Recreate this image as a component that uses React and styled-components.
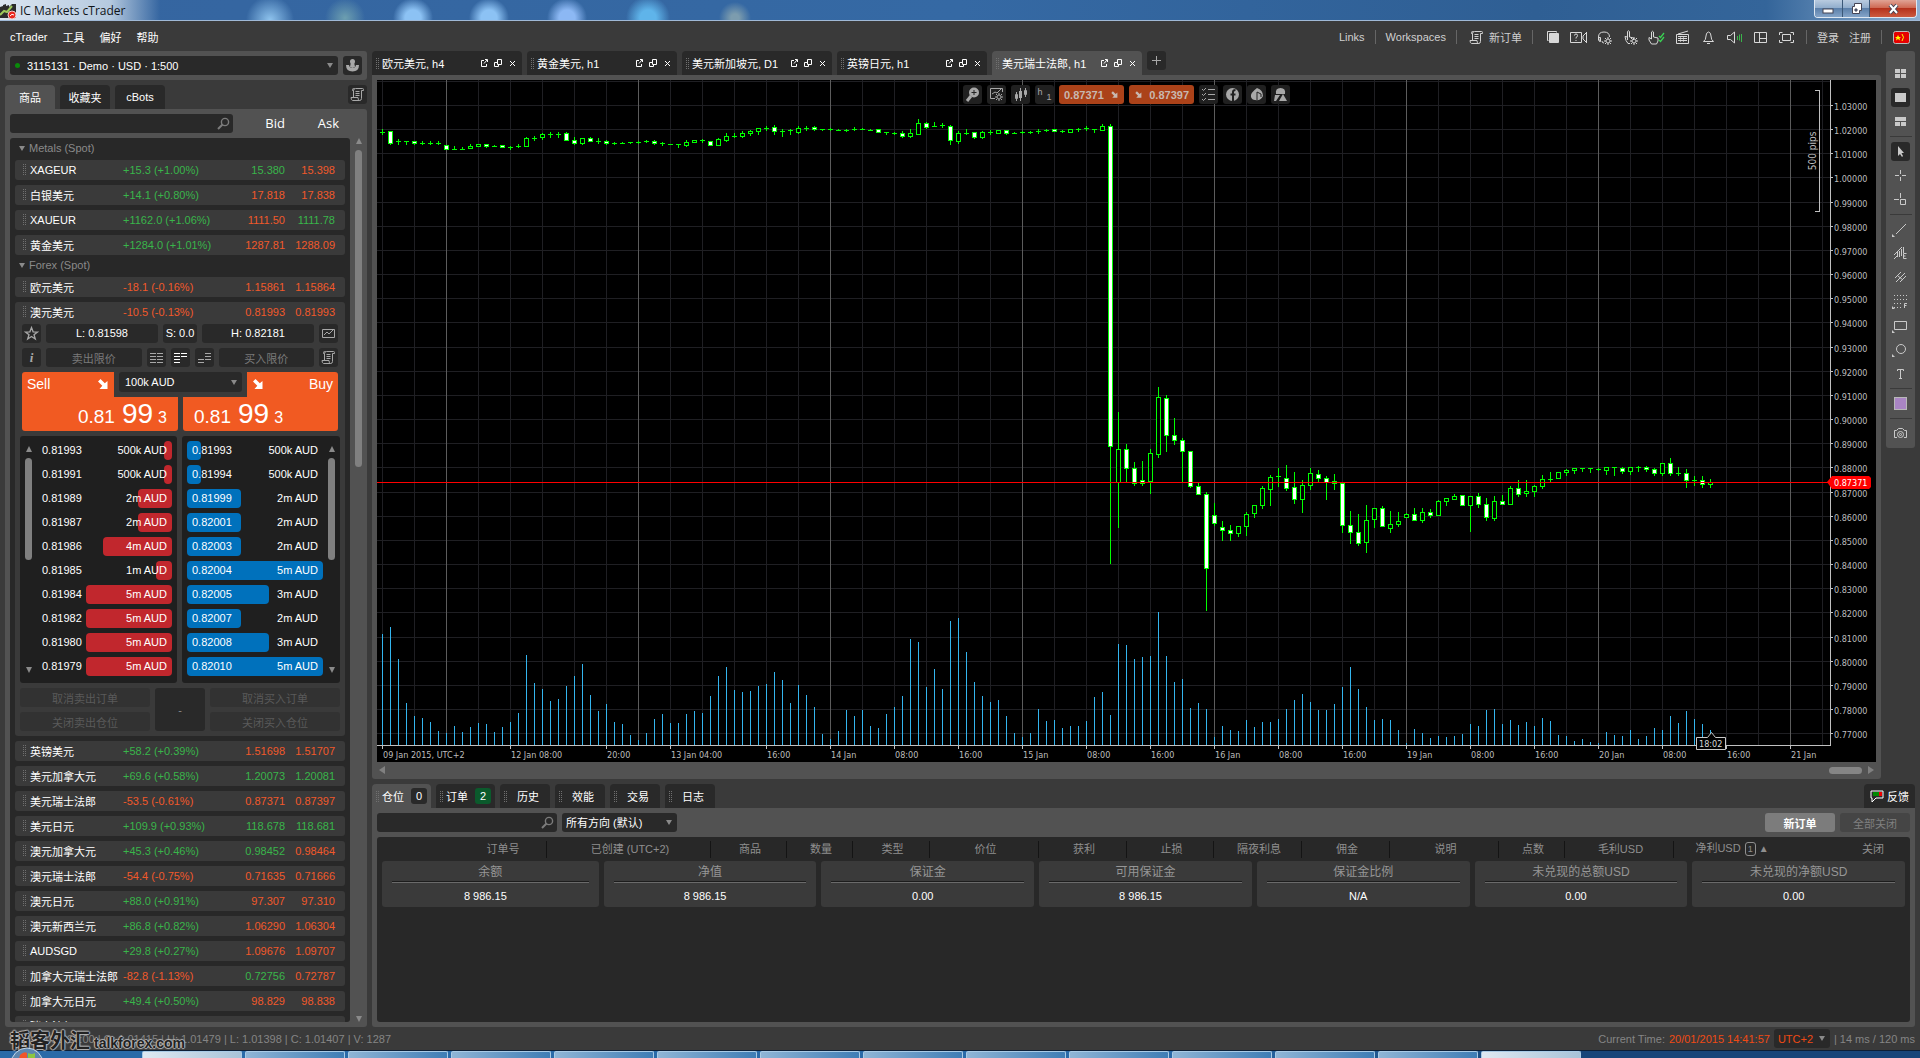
import React from "react";
import styled, { createGlobalStyle } from "styled-components";

const GlobalStyle = createGlobalStyle`
  * { box-sizing: border-box; }
  body {
    margin: 0;
    background: #3a3a3a;
    color: #fff;
    font: 11px "Liberation Sans", "Noto Sans CJK SC", sans-serif;
  }
  button, input, select {
    font: inherit;
    color: inherit;
    border: 0;
    padding: 0;
    margin: 0;
    background: none;
    outline: none;
  }
  table { border-spacing: 0; }
  td, th { padding: 0; font-weight: normal; }
  svg { display: block; flex: none; }
`;

const GREEN = "#39b54a";
const ORANGE = "#f1592a";

/* ---------- data ---------- */

const metals = [
  ["XAGEUR", "+15.3 (+1.00%)", "15.380", 1, "15.398", 0],
  ["白银美元", "+14.1 (+0.80%)", "17.818", 0, "17.838", 0],
  ["XAUEUR", "+1162.0 (+1.06%)", "1111.50", 0, "1111.78", 1],
  ["黄金美元", "+1284.0 (+1.01%)", "1287.81", 0, "1288.09", 0],
];

const forex = [
  ["欧元美元", "-18.1 (-0.16%)", "1.15861", 0, "1.15864", 0],
  ["澳元美元", "-10.5 (-0.13%)", "0.81993", 0, "0.81993", 0, true],
  ["英镑美元", "+58.2 (+0.39%)", "1.51698", 0, "1.51707", 0],
  ["美元加拿大元", "+69.6 (+0.58%)", "1.20073", 1, "1.20081", 1],
  ["美元瑞士法郎", "-53.5 (-0.61%)", "0.87371", 0, "0.87397", 0],
  ["美元日元", "+109.9 (+0.93%)", "118.678", 1, "118.681", 1],
  ["澳元加拿大元", "+45.3 (+0.46%)", "0.98452", 1, "0.98464", 0],
  ["澳元瑞士法郎", "-54.4 (-0.75%)", "0.71635", 0, "0.71666", 0],
  ["澳元日元", "+88.0 (+0.91%)", "97.307", 0, "97.310", 0],
  ["澳元新西兰元", "+86.8 (+0.82%)", "1.06290", 0, "1.06304", 0],
  ["AUDSGD", "+29.8 (+0.27%)", "1.09676", 0, "1.09707", 0],
  ["加拿大元瑞士法郎", "-82.8 (-1.13%)", "0.72756", 1, "0.72787", 0],
  ["加拿大元日元", "+49.4 (+0.50%)", "98.829", 0, "98.838", 0],
  ["瑞士法郎日元", "+204.1 (+1.53%)", "135.810", 1, "135.866", 1],
];

const bids = [
  ["0.81993", "500k AUD", 8],
  ["0.81991", "500k AUD", 8],
  ["0.81989", "2m AUD", 34],
  ["0.81987", "2m AUD", 34],
  ["0.81986", "4m AUD", 69],
  ["0.81985", "1m AUD", 16],
  ["0.81984", "5m AUD", 86],
  ["0.81982", "5m AUD", 86],
  ["0.81980", "5m AUD", 86],
  ["0.81979", "5m AUD", 86],
];

const asks = [
  ["0.81993", "500k AUD", 14],
  ["0.81994", "500k AUD", 14],
  ["0.81999", "2m AUD", 54],
  ["0.82001", "2m AUD", 54],
  ["0.82003", "2m AUD", 54],
  ["0.82004", "5m AUD", 136],
  ["0.82005", "3m AUD", 82],
  ["0.82007", "2m AUD", 54],
  ["0.82008", "3m AUD", 82],
  ["0.82010", "5m AUD", 136],
];

// high, body top, body bottom, low, 1 for a falling bar
const candles = [
  [129,132,132,134],[131,131,143,144,1],[139,141,141,144],[141,141,141,144],[141,141,143,144,1],
  [141,143,143,144],[141,143,143,144],[141,143,143,144],[145,145,149,149,1],[146,149,149,149],
  [147,149,149,149],[144,146,148,148],[144,144,146,146],[144,144,146,147,1],[145,146,146,146],
  [145,145,147,147,1],[146,147,147,149],[144,146,146,147],[137,138,146,146],[136,138,138,140],
  [133,134,137,139],[132,134,134,137],[132,134,134,137],[132,133,140,140,1],[137,140,143,144,1],
  [138,138,143,144],[137,138,141,141,1],[138,141,141,143],[140,141,143,144,1],[142,143,143,144],
  [142,143,143,143],[142,142,142,143],[141,142,142,143],[140,141,141,142],[140,141,143,144,1],
  [142,143,143,145],[144,144,144,144],[144,144,144,147],[140,142,145,146],[140,140,142,142],
  [139,140,140,142],[141,141,145,145,1],[138,139,145,145],[133,136,140,141],[133,136,136,137],
  [131,133,136,137],[130,131,133,135],[128,128,131,134],[126,128,128,130],[125,127,131,134,1],
  [129,131,131,136],[129,130,130,134],[126,128,132,133],[126,128,128,130],[126,127,129,130,1],
  [129,129,129,130],[128,129,129,130],[129,130,130,130],[129,130,130,131],[127,129,129,130],
  [128,129,129,129],[129,130,130,130],[129,129,132,132,1],[132,132,132,134],[132,133,133,134],
  [131,133,136,137,1],[129,133,136,137],[119,123,134,134],[122,123,127,128,1],[122,126,126,126],
  [123,125,125,127],[125,126,140,144,1],[131,133,141,143],[129,133,133,134],[132,132,137,138,1],
  [131,132,137,138],[130,132,132,134],[130,130,133,133],[130,130,133,134,1],[132,133,133,133],
  [131,132,132,133],[131,132,132,133],[129,131,131,133],[129,130,130,131],[129,129,131,131,1],
  [130,131,131,132],[129,129,132,132],[128,129,129,131],[126,128,128,130],[129,129,129,132],
  [124,126,130,130],[124,126,446,563,1],[412,449,482,527],[444,449,468,481,1],[462,468,483,485,1],
  [461,480,483,485,1],[449,453,481,493],[387,397,454,457],[395,398,435,451,1],[418,435,440,444,1],
  [438,440,451,481,1],[451,451,486,487,1],[483,486,494,494,1],[492,494,568,610,1],[503,515,523,525,1],
  [521,527,530,540,1],[525,530,533,540,1],[526,526,533,536],[512,514,526,535],[505,505,513,517],
  [486,488,505,508],[475,477,489,505],[468,476,476,486],[465,478,488,490,1],[472,487,499,503,1],
  [480,485,499,512],[468,473,485,489],[470,474,478,481,1],[476,478,482,499,1],[474,481,483,489,1],
  [483,483,525,532,1],[511,525,532,543,1],[514,532,543,545,1],[505,520,542,552],[508,508,519,527],
  [506,508,526,526,1],[511,524,528,532],[512,521,524,526],[513,514,517,517],[508,514,520,520,1],
  [508,512,520,522],[509,512,515,517,1],[500,501,515,515],[498,498,501,505],[494,496,499,499],
  [495,495,505,505,1],[496,496,505,531],[493,496,504,507,1],[498,504,517,520,1],[496,501,518,520],
  [495,501,504,504,1],[486,488,504,504],[480,488,494,496,1],[480,491,493,496],[485,486,491,496],
  [475,479,486,488],[472,479,479,482],[472,472,478,478],[469,470,472,475],[468,468,470,473],
  [468,468,468,471],[468,468,468,472],[468,469,469,470],[467,467,470,474],[467,467,467,475],
  [467,468,471,473,1],[467,467,471,474],[466,467,467,471],[466,467,469,471,1],[468,469,473,475,1],
  [463,463,473,475],[458,463,473,475,1],[467,473,473,475],[469,473,480,487,1],[476,480,480,485],
  [476,480,484,487,1],[479,482,484,487],
];

const volumes = [
  111,118,86,42,29,27,23,14,12,19,13,18,22,21,13,18,23,32,90,62,56,44,46,59,69,81,50,34,41,23,21,10,
  5,12,26,31,22,22,31,34,32,49,69,78,55,53,54,59,61,73,65,42,60,50,38,11,6,14,35,29,35,19,17,31,38,
  49,106,103,58,76,56,124,127,93,63,49,43,45,29,12,8,12,36,24,25,17,19,19,24,48,53,30,101,100,86,88,
  89,133,89,63,66,37,42,36,8,19,15,14,25,18,23,23,26,36,45,51,43,35,35,41,58,78,56,38,25,26,25,15,2,
  16,12,7,9,8,9,11,21,19,35,36,21,25,20,23,19,27,24,10,9,4,6,3,2,13,10,9,15,6,9,17,15,29,22,34,26,21,15,
];

// bar index, label
const timeLabels = [
  [0, "09 Jan 2015, UTC+2"], [16, "12 Jan 08:00"], [28, "20:00"], [36, "13 Jan 04:00"], [48, "16:00"],
  [56, "14 Jan"], [64, "08:00"], [72, "16:00"], [80, "15 Jan"], [88, "08:00"], [96, "16:00"],
  [104, "16 Jan"], [112, "08:00"], [120, "16:00"], [128, "19 Jan"], [136, "08:00"], [144, "16:00"],
  [152, "20 Jan"], [160, "08:00"], [168, "16:00"], [176, "21 Jan"],
];

const chartTabs = ["欧元美元, h4", "黄金美元, h1", "美元新加坡元, D1", "英镑日元, h1", "美元瑞士法郎, h1"];

const columns = [
  ["", 80], ["订单号", 90], ["已创建 (UTC+2)", 164], ["商品", 76], ["数量", 66], ["类型", 77],
  ["价位", 109], ["获利", 88], ["止损", 87], ["隔夜利息", 88], ["佣金", 88], ["说明", 109],
  ["点数", 66], ["毛利USD", 109], ["净利USD", 114],
];

const totals = [
  ["余额", "8 986.15"], ["净值", "8 986.15"], ["保证金", "0.00"], ["可用保证金", "8 986.15"],
  ["保证金比例", "N/A"], ["未兑现的总额USD", "0.00"], ["未兑现的净额USD", "0.00"],
];

/* ---------- icons ---------- */

const Svg = ({ w = 19, children, ...rest }) => (
  <svg width={w} height="19" viewBox={`0 0 ${w} 19`} fill="none" stroke="currentColor" aria-hidden="true" {...rest}>
    {children}
  </svg>
);

const gear = (x, y) => (
  <g>
    <circle cx={x} cy={y} r="2" />
    <path d={`M${x} ${y - 4}v2M${x} ${y + 2}v2M${x - 4} ${y}h2M${x + 2} ${y}h2M${x - 3} ${y - 3}l1 1M${x + 2} ${y + 2}l1 1M${x + 3} ${y - 3}l-1 1M${x - 3} ${y + 3}l1-1`} />
  </g>
);

const Scroll = () => (
  <Svg>
    <path d="M5.5 12.500v-7q0-2 2-2h7q1 0 1 1v1h-2v8q0 2-2 2M6.500 3.500h-1q-1 0-1 1v1h1M11.500 15.500h-7q-1.500-.5-1.500-3h7q0 3 1.500 3z" />
    <path d="M7.500 6.500h4M7.500 8.500h4M7.500 10.500h4" />
  </Svg>
);
const Search = () => (
  <Svg><circle cx="11" cy="8" r="3.600" strokeWidth="1.400" /><path d="M8.500 10.500L4 15" strokeWidth="2" /></Svg>
);
const Star = () => (
  <Svg><path d="M9.500 3.500l1.600 4.300 4.400.2-3.500 2.700 1.300 4.300-3.800-2.500L5.700 15 7 10.700 3.500 8l4.400-.2z" strokeWidth="1.300" /></Svg>
);
const MiniChart = () => (
  <Svg><path d="M3.500 5.500h12v8h-12zM5 11l3-3 2 2 4-4" /></Svg>
);
const Bars = ({ left = [0, 1, 2, 3], right = [0, 1, 2, 3] }) => (
  <Svg>
    {left.map(i => <path key={`l${i}`} d={`M3 ${5.5 + i * 3}h6`} />)}
    {right.map(i => <path key={`r${i}`} d={`M10 ${5.5 + i * 3}h6`} />)}
  </Svg>
);
const Arrow = ({ size = 14 }) => (
  <svg width={size} height={size} viewBox="0 0 14 14" fill="currentColor" aria-hidden="true">
    <path d="M2 4.500L4.500 2l4.300 4.300L11.500 4v8H3.500l2.800-3.200z" />
  </svg>
);
const Detach = () => (
  <svg width="11" height="11" viewBox="0 0 11 11" fill="none" stroke="currentColor"><path d="M5 2.500H2.500v6h5V6M6 1.500h2.500V4M8 2L5 5.500" /></svg>
);
const Windows = () => (
  <svg width="11" height="11" viewBox="0 0 11 11" fill="none" stroke="currentColor"><path d="M4.500 1.500h4v5h-4zM4 4.500H1.500v4h4V7" /></svg>
);
const Cross = () => (
  <svg width="11" height="11" viewBox="0 0 11 11" fill="none" stroke="currentColor"><path d="M3 3l5 5M8 3L3 8" /></svg>
);

const topIcons = [
  ["复制", <Svg><path d="M5.500 12.500h-1v-9h9v1" /><rect x="6" y="5" width="10" height="10" rx="1" fill="currentColor" stroke="none" /></Svg>],
  ["视频教程", <Svg><path d="M1.500 4.500h11v10h-11zM17.500 4v11M17 5l-3 3v3l3 3M5.500 7.500q0-1.500 1.500-1.500t1.500 1.500-1.500 2v1M7 12v1" /></Svg>],
  ["支持", <Svg><path d="M3.500 12.500V9q0-5 5.500-5t5.500 5M3.500 9.500h2v4h-1zM7 13q0 2 2 2" />{gear(13, 13)}</Svg>],
  ["点击设置", <Svg><path d="M6.500 12V3.500q1-1.500 2 0V9l4 1v2M6.500 9L4 8.500l1 4 2 3h2" />{gear(13, 13)}</Svg>],
  ["快速交易", <Svg><path d="M4.500 11V4q1-1.500 2 0v5l4.500 1v3l-1.500 3h-5L2 12V9.500z" /><path d="M12 8l1.500 1.500L17 5M12 12l1.500 1.500L17 9" stroke="#39d353" strokeWidth="1.300" /></Svg>],
  ["键盘", <Svg><path d="M5 6L15 3M3.500 6.500h12v9h-12zM5 8.500h9M5 10.500h9M5 12.500h9" /><path d="M7.500 8v6M10.500 8v6" strokeWidth="0.600" /></Svg>],
  ["提醒", <Svg><path d="M4.500 13.500Q7 12 7 8q0-3.500 2.500-4Q12 4.500 12 8q0 4 2.500 5.500zM8 15.500h3" /></Svg>],
  ["声音", <Svg><path d="M2.500 7.500h3l4-3.500v11l-4-3.500h-3z" /><path d="M12.500 8v4M14.500 6.500v6M16.500 6v8" stroke="#39b54a" /></Svg>],
  ["布局", <Svg><path d="M3.500 4.500h12v10h-12zM8.500 4v11M9 10.500h6" /></Svg>],
  ["全屏", <Svg><path d="M5.500 6.500h8v6h-8zM2.500 7V4.500h3M13.500 4.500h3V7M2.500 12v2.500h3M13.500 14.500h3V12" /></Svg>],
];

const corner = <path d="M1 14v3h3z" fill="currentColor" stroke="none" />;
const tools = [
  [
    ["四格", <Svg fill="currentColor" stroke="none"><path d="M4 5h5v4H4zM10 5h5v4h-5zM4 10h5v4H4zM10 10h5v4h-5z" /></Svg>],
    ["单图", <Svg fill="currentColor" stroke="none"><path d="M4 5h11v9H4z" /></Svg>, true],
    ["三格", <Svg fill="currentColor" stroke="none"><path d="M4 5h11v4H4zM4 10h5v4H4zM10 10h5v4h-5z" /></Svg>],
  ],
  [
    ["指针", <Svg fill="currentColor" stroke="none"><path d="M7 4v10l2-2 2 3 1-1-1.500-3H13z" /></Svg>, true],
    ["十字线", <Svg><path d="M9.500 4v4M9.500 11v4M4 9.500h4M11 9.500h4" /></Svg>],
    ["测量", <Svg><path d="M9.500 3v5M3 9.500h5M9.500 9.500h5v5h-5z" /></Svg>],
  ],
  [
    ["趋势线", <Svg><path d="M5 14L15 4" />{corner}</Svg>],
    ["等距通道", <Svg><path d="M3 11l8-8M3 15l3-3M6.500 8v5M8.500 7v6M10.500 5v7M12.500 3v6M15.500 9.500h-3v5h3M12.500 12h2" /></Svg>],
    ["平行线", <Svg><path d="M4 10l6-6M5 14L14 5M9 14l6-6M7 8l5 4" /></Svg>],
    ["斐波那契", <Svg><path d="M3 3.500h13M3 7.500h13M3 11.500h8M3 15.500h8" strokeDasharray="1 2" /><path d="M13.500 16v-4.500H16M13 13.500h2.500" />{corner}</Svg>],
    ["矩形", <Svg><path d="M3.500 5.500h12v8h-12z" />{corner}</Svg>],
    ["椭圆", <Svg><circle cx="10" cy="9" r="4.500" />{corner}</Svg>],
    ["文字", <Svg><path d="M6.500 7V5.500h6V7M9.500 5v9M8 14.500h3" /></Svg>],
  ],
  [["颜色", <Svg><rect x="3.500" y="3.500" width="12" height="12" fill="#a985c4" stroke="#b8b8b8" /></Svg>]],
  [["截图", <Svg><path d="M6 13.500H3.500v-7h2l2-2h4l2 2h2v7H13" /><circle cx="9.500" cy="10.500" r="3" /><circle cx="9.500" cy="10.500" r="1" /></Svg>]],
];

/* ---------- shell ---------- */

const Page = styled.div`
  height: 100vh;
  display: flex;
  flex-direction: column;
  overflow: hidden;
`;

const TitleBar = styled.header`
  height: 21px;
  flex: none;
  display: flex;
  align-items: center;
  justify-content: space-between;
  padding: 0 3px 0 0;
  border-bottom: 1px solid #9fb8d6;
  color: #101418;
  font: 12px "Open Sans", sans-serif;
  background:
    linear-gradient(90deg, #dbe5f0 0, #b5c9df 110px, transparent 160px),
    radial-gradient(circle at 270px 20px, #8fc4ee 0, transparent 24px),
    radial-gradient(circle at 345px 18px, #6d9fb0 0, transparent 20px),
    radial-gradient(circle at 413px 18px, #8cc2f4 8px, transparent 20px),
    radial-gradient(circle at 489px 18px, #8cc2f4 8px, transparent 20px),
    radial-gradient(circle at 567px 18px, #8cb8f4 8px, transparent 20px),
    radial-gradient(circle at 648px 18px, #5fb4ea 8px, transparent 22px),
    radial-gradient(circle at 735px 18px, #7c9cae 4px, transparent 16px),
    linear-gradient(90deg, #3565a0, #3569a4 50%, #2f5f94 80%, #34659a 92%, #8fb0d2);
`;

const AppName = styled.div`
  display: flex;
  align-items: center;
  gap: 4px;
`;

const WindowButtons = styled.div`
  display: flex;
  align-self: flex-start;
  border: 1px solid #dfe8f2;
  border-top: 0;
  border-radius: 0 0 4px 4px;
  overflow: hidden;
`;

const WindowButton = styled.button`
  width: ${p => (p.$close ? 47 : 27)}px;
  height: 17px;
  display: grid;
  place-items: center;
  color: #fff;
  border-left: ${p => (p.$first ? 0 : 1)}px solid #3b5878;
  background: ${p =>
    p.$close
      ? "linear-gradient(#e0a395, #cf6a54 45%, #b5321c 50%, #cc5a40)"
      : "linear-gradient(#b9cbe0, #92aecd 45%, #5c80aa 50%, #84a4c8)"};
`;

const MenuBar = styled.nav`
  height: 30px;
  flex: none;
  display: flex;
  align-items: center;
  justify-content: space-between;
  padding: 2px 9px 0 10px;
`;

const MenuGroup = styled.div`
  display: flex;
  align-items: center;
  gap: ${p => p.$gap}px;
`;

const MenuButton = styled.button`
  display: flex;
  align-items: center;
  color: ${p => (p.$dim ? "#d0d0d0" : "#fff")};
`;

const MenuLink = styled.a`
  color: #d0d0d0;
  text-decoration: none;
`;

const Divider = styled.span`
  width: 1px;
  height: 14px;
  background: #666;
`;

const IconStrip = styled.div`
  display: flex;
  gap: 7px;

  button { color: #d8d8d8; }
`;

const Main = styled.main`
  flex: 1;
  min-height: 0;
  display: flex;
  gap: 5px;
  padding: 0 5px;
`;

const Sidebar = styled.aside`
  width: 362px;
  flex: none;
  display: flex;
  flex-direction: column;
`;

const AccountBar = styled.div`
  display: flex;
  gap: 5px;
  padding: 5px;
  margin-bottom: 5px;
  background: #525252;
  border-radius: 3px;
`;

const IconButton = styled.button`
  width: 19px;
  height: 19px;
  flex: none;
  display: grid;
  place-items: center;
  border-radius: 3px;
  background: ${p => (p.$flat ? "none" : "#292929")};
  color: ${p => (p.$bright ? "#fff" : "#a8a8a8")};
`;

const SelectWrap = styled.div`
  display: grid;
  align-items: center;
  flex: ${p => (p.$grow ? 1 : "none")};
  width: ${p => (p.$width ? `${p.$width}px` : "auto")};
  height: ${p => p.$height || 19}px;
  border-radius: 3px;
  background: #292929;

  & > * { grid-area: 1 / 1; }
`;

const Select = styled.select`
  appearance: none;
  width: 100%;
  height: 100%;
  padding-left: ${p => p.$pad || 6}px;
  color: ${p => p.$color || "#fff"};
`;

const Caret = styled.span`
  justify-self: end;
  margin-right: 5px;
  border: 3px solid transparent;
  border-top: 5px solid #8a8a8a;
  border-bottom: 0;
  pointer-events: none;
`;

const Dot = styled.i`
  width: 5px;
  height: 5px;
  margin-left: 5px;
  border-radius: 50%;
  background: #0a8a0a;
`;

const Drop = ({ label, value, color, pad, dot, ...box }) => (
  <SelectWrap {...box}>
    <Select aria-label={label} $color={color} $pad={pad}>
      <option>{value}</option>
    </Select>
    {dot && <Dot />}
    <Caret />
  </SelectWrap>
);

const TabRow = styled.div`
  height: 24px;
  flex: none;
  display: flex;
  gap: 5px;
`;

const Tab = styled.button`
  display: flex;
  align-items: center;
  justify-content: ${p => (p.$start ? "flex-start" : "center")};
  gap: 3px;
  height: 24px;
  width: ${p => p.$width}px;
  padding: ${p => (p.$start ? "0 4px" : 0)};
  border-radius: 4px 4px 0 0;
  background: ${p => (p.$active ? "#525252" : "#292929")};
`;

const Spring = styled.span`
  flex: 1;
  text-align: ${p => (p.$center ? "center" : "left")};
`;

const dots = "repeating-linear-gradient(#707070 0 1px, transparent 1px 2px)";

const Grip = styled.i`
  width: 3px;
  height: 11px;
  flex: none;
  background: ${dots} 0 0 / 1px 11px no-repeat, ${dots} 2px 0 / 1px 11px no-repeat;
`;

const Panel = styled.section`
  display: flex;
  flex-direction: column;
  min-height: 0;
  flex: ${p => (p.$grow ? 1 : "none")};
  padding: 5px;
  background: #525252;
  border-radius: ${p => (p.$round ? "0 3px 3px 3px" : "0 0 3px 3px")};
`;

const SearchBox = styled.label`
  display: flex;
  width: ${p => p.$width}px;
  height: 19px;
  border-radius: 3px;
  background: #292929;
  color: #7c7c7c;

  input { flex: 1; min-width: 0; padding-left: 5px; color: #fff; }
`;

/* ---------- watch list ---------- */

const ListHead = styled.div`
  display: flex;
  align-items: center;
  margin-bottom: 5px;
  font: 13px "Open Sans", sans-serif;
  line-height: 19px;

  span { width: 52px; text-align: right; }
  span + span { width: 54px; }
`;

const ListBody = styled.div`
  flex: 1;
  min-height: 0;
  display: flex;
  gap: 5px;
`;

const List = styled.div`
  flex: 1;
  overflow: hidden;
  padding: 0 5px;
  border-radius: 3px;
  background: #282828;
`;

const GroupName = styled.button`
  height: 22px;
  display: flex;
  align-items: center;
  gap: 4px;
  padding: 0 0 2px 4px;
  color: #8a8a8a;

  &::before {
    content: "";
    border: 3px solid transparent;
    border-top: 5px solid #8a8a8a;
    border-bottom: 0;
  }
`;

const Quotes = styled.table`
  display: block;

  tbody { display: grid; gap: 5px; }
`;

const QuoteRow = styled.tr`
  display: grid;
  grid-template-columns: 93px 1fr 60px 50px;
  align-items: center;
  height: 20px;
  padding: 0 10px 0 15px;
  border-radius: ${p => (p.$open ? "3px 3px 0 0" : "3px")};
  background: ${dots} 8px 4px / 1px 11px no-repeat, ${dots} 10px 4px / 1px 11px no-repeat, #3a3a3a;

  th { text-align: left; white-space: nowrap; }
`;

const Num = styled.td`
  color: ${p => (p.$up ? GREEN : ORANGE)};
  text-align: ${p => (p.$left ? "left" : "right")};
`;

const DetailRow = styled.tr`
  display: block;
  margin-top: -5px;

  > td { display: grid; gap: 5px; padding: 2px 5px 5px; background: #3a3a3a; border-radius: 0 0 3px 3px; }
`;

const Line = styled.div`
  display: flex;
  gap: 5px;
  padding: 0 2px;
`;

const Cell = styled.div`
  flex: ${p => (p.$width ? "none" : 1)};
  width: ${p => (p.$width ? `${p.$width}px` : "auto")};
  line-height: 19px;
  text-align: center;
  border-radius: 3px;
  background: #292929;
`;

const LimitButton = styled.button`
  flex: 1;
  height: 19px;
  border-radius: 3px;
  background: #292929;
  color: #7a7a7a;
`;

const Ticket = styled.div`
  display: grid;
  grid-template-columns: 97px 1fr 5px 1fr 96px;
  grid-template-rows: 25px 34px;
  padding: 0 2px;
`;

const Deal = styled.button`
  grid-row: 1 / 3;
  grid-column: ${p => (p.$buy ? "4 / 6" : "1 / 3")};
  display: flex;
  flex-direction: column;
  justify-content: space-between;
  padding: 4px ${p => (p.$buy ? 5 : 11)}px 0 ${p => (p.$buy ? 11 : 5)}px;
  border-radius: 3px;
  background: #f15a22;
  clip-path: ${p =>
    p.$buy
      ? "polygon(64px 0, 100% 0, 100% 100%, 0 100%, 0 25px, 64px 25px)"
      : "polygon(0 0, 92px 0, 92px 25px, 100% 25px, 100% 100%, 0 100%)"};
`;

const DealHead = styled.span`
  display: flex;
  align-items: center;
  justify-content: space-between;
  width: ${p => (p.$buy ? 82 : 83)}px;
  align-self: ${p => (p.$buy ? "flex-end" : "flex-start")};
  font-size: 14px;
  line-height: 16px;
`;

const Price = styled.span`
  align-self: ${p => (p.$buy ? "flex-start" : "flex-end")};
  font-size: 19px;
  line-height: 26px;

  b { font-weight: normal; font-size: 28px; margin: 0 5px 0 7px; }
  small { font-size: 16px; }
`;

const Amount = styled.div`
  grid-row: 1;
  grid-column: 2 / 5;
`;

const Depth = styled.div`
  display: flex;
  gap: 5px;
`;

const DepthSide = styled.div`
  flex: 1;
  display: flex;
  flex-direction: ${p => (p.$buy ? "row-reverse" : "row")};
  gap: 5px;
  height: 247px;
  padding: 0 5px;
  border-radius: 3px;
  background: #1f1f1f;
`;

const DepthTable = styled.table`
  flex: 1;
  display: block;
  padding-top: 5px;

  tbody { display: grid; gap: 5px; }
  tr { display: grid; grid-template-columns: 1fr auto; line-height: 19px; white-space: nowrap; }
  th { grid-area: 1 / 1; text-align: left; padding-left: 5px; z-index: 1; }
  td { grid-area: 1 / 2; padding-right: 5px; z-index: 1; }
  td:last-child {
    grid-area: 1 / 1 / 1 / 3;
    justify-self: ${p => (p.$buy ? "start" : "end")};
    padding: 0;
    border-radius: 4px;
    background: ${p => (p.$buy ? "#0071bc" : "#c1272d")};
    z-index: 0;
  }
`;

const ScrollTrack = styled.div`
  width: 7px;
  flex: none;
  display: flex;
  flex-direction: column;
  align-items: center;
  justify-content: space-between;
  padding: ${p => (p.$inset ? "10px 0" : 0)};

  &::before, &::after { content: ""; border: 3px solid transparent; }
  &::before { border-bottom: 6px solid #8a8a8a; border-top: 0; }
  &::after { border-top: 6px solid #8a8a8a; border-bottom: 0; }
`;

const Thumb = styled.i`
  width: 7px;
  height: ${p => p.$size}px;
  margin: 6px 0 auto;
  border-radius: 4px;
  background: #808080;
`;

const Closers = styled.div`
  display: grid;
  grid-template-columns: 1fr 50px 1fr;
  grid-template-rows: 19px 19px;
  gap: 5px;
  grid-auto-flow: column;
`;

const CloseButton = styled.button`
  grid-row: ${p => (p.$tall ? "1 / 3" : "auto")};
  border-radius: 3px;
  background: ${p => (p.$tall ? "#292929" : "#323232")};
  color: ${p => (p.$tall ? "#8a8a8a" : "#5a5a5a")};
`;

/* ---------- chart ---------- */

const Content = styled.div`
  flex: 1;
  min-width: 0;
  display: flex;
  flex-direction: column;
  gap: 5px;
`;

const ChartRow = styled.div`
  display: flex;
  align-items: flex-start;
  gap: 5px;
`;

const ChartColumn = styled.div`
  flex: 1;
  min-width: 0;
`;

const ChartArea = styled.div`
  position: relative;
  background: #000;

  > svg { width: 100%; height: auto; font: 9px "DejaVu Sans Condensed", "Noto Sans", sans-serif; }
`;

const Overlay = styled.div`
  position: absolute;
  top: 5px;
  left: 0;
  right: 0;
  display: flex;
  justify-content: center;
  gap: 5px;
`;

const ChartButton = styled(IconButton)`
  background: #202020;
`;

const QuoteButton = styled.button`
  width: 65px;
  height: 19px;
  display: flex;
  align-items: center;
  justify-content: space-between;
  flex-direction: ${p => (p.$buy ? "row-reverse" : "row")};
  padding: 0 5px;
  border-radius: 3px;
  background: #ab4219;
  color: #c8b8b0;
  font-weight: bold;
`;

const HScroll = styled.div`
  height: 12px;
  display: flex;
  align-items: center;
  justify-content: flex-end;
  gap: 6px;
  padding: 4px 2px 0 2px;

  &::before, &::after { content: ""; border: 4px solid transparent; }
  &::before { border-right: 6px solid #808080; border-left: 0; margin-right: auto; }
  &::after { border-left: 6px solid #808080; border-right: 0; }

  i { width: 33px; height: 7px; border-radius: 4px; background: #858585; }
`;

const Toolbar = styled.div`
  width: 29px;
  flex: none;
  display: flex;
  flex-direction: column;
  align-items: center;
  gap: 5px;
  padding: 5px 0;
  border-radius: 3px;
  background: #525252;

  &::before { content: ""; width: 19px; height: 3px; background: radial-gradient(#222 45%, transparent 50%) 0 0 / 2px 2px; }
  hr { width: 22px; height: 1px; border: 0; margin: 0; background: #3a3a3a; }
  button { color: #cacaca; }
`;

const STEP = 8;
const barX = i => 5 + i * STEP;
const rowY = y => y - 80;
const priceY = n => Math.round(25 + n * 24.16);

const Chart = () => (
  <svg viewBox="0 0 1499 682" role="img" aria-label="美元瑞士法郎, h1">
    <g shapeRendering="crispEdges">
      {Array.from({ length: 28 }, (_, k) => (
        <rect key={k} x="0" y={priceY(k - 1)} width="1453" height="1" fill="#1f1f23" />
      ))}
      {Array.from({ length: 46 }, (_, k) => (
        <rect key={k} x={barX(k * 4)} y="0" width="1" height="665" fill={k % 6 === 2 ? "#5c5c5c" : "#1f1f23"} />
      ))}
      {volumes.map((v, i) => (
        <rect key={i} x={barX(i)} y={665 - v} width="1" height={v} fill="#33b5ee" />
      ))}
      {candles.map(([high, top, bottom, low, down], i) => {
        const x = barX(i);
        return (
          <g key={i} fill="#00ff00">
            <rect x={x} y={rowY(high)} width="1" height={low - high + 1} />
            <rect x={x - 2} y={rowY(top)} width="5" height={bottom - top + 1} />
            {bottom - top > 1 && (
              <rect x={x - 1} y={rowY(top) + 1} width="3" height={bottom - top - 1} fill={down ? "#fff" : "#000"} />
            )}
          </g>
        );
      })}
      <path d="M1453.500 0v666M0 665.500h1454" stroke="#c0c0c0" />
      {timeLabels.map(([i]) => <rect key={i} x={barX(i)} y="666" width="1" height="3" fill="#c0c0c0" />)}
      {Array.from({ length: 27 }, (_, k) => <rect key={k} x="1454" y={priceY(k)} width="2" height="1" fill="#c0c0c0" />)}
      <rect x="0" y="402" width="1453" height="1" fill="#f00" />
      <path d="M1438 10.500h4.500v121h-4.500" fill="none" stroke="#c0c0c0" />
    </g>
    <g fill="#bdbdbd">
      {Array.from({ length: 27 }, (_, k) => (
        <text key={k} x="1457" y={priceY(k) + 5}>{(1.03 - k / 100).toFixed(5)}</text>
      ))}
      {timeLabels.map(([i, label]) => <text key={i} x={barX(i) + 1} y="678">{label}</text>)}
      <text transform="translate(1439 71) rotate(-90)" textAnchor="middle" fontSize="10">500 pips</text>
    </g>
    <path d="M1450 402l5-6h37l2 2v9l-2 2h-37z" fill="#f00" />
    <text x="1457" y="406" fill="#fff">0.87371</text>
    <path d="M1319.500 657.500h11l4-5 4 5h10v12h-29z" fill="#000" stroke="#c8c8c8" />
    <text x="1322" y="667" fill="#d8d8d8">18:02</text>
  </svg>
);

/* ---------- positions ---------- */

const Lower = styled.div`
  flex: 1;
  min-height: 0;
  display: flex;
  flex-direction: column;
`;

const Count = styled.span`
  width: 16px;
  line-height: 16px;
  text-align: center;
  border-radius: 3px;
  background: ${p => (p.$green ? "#0b5a2c" : "#292929")};
`;

const Filters = styled.div`
  display: flex;
  gap: 5px;
  margin-bottom: 5px;
`;

const Action = styled.button`
  width: 70px;
  height: 19px;
  border-radius: 3px;
  font-weight: ${p => (p.$primary ? "bold" : "normal")};
  background: ${p => (p.$primary ? "#7c7c7c" : "#454545")};
  color: ${p => (p.$primary ? "#fff" : "#808080")};
`;

const Grid = styled.div`
  flex: 1;
  min-height: 0;
  border-radius: 3px;
  background: #282828;
`;

const Orders = styled.table`
  width: 100%;
  table-layout: fixed;
  color: #8f8f8f;

  th { height: 24px; }
  th span { display: block; padding-left: 3px; line-height: 17px; border-right: 1px solid #141414; }
  th:first-child span, th:nth-last-child(-n + 2) span { border-color: transparent; }
  th:last-child { padding-left: 46px; }
  sup { margin-left: 4px; padding: 1px 2px; border: 1px solid #8f8f8f; border-radius: 3px; font-size: 9px; vertical-align: baseline; }
  small { margin-left: 3px; font-size: 10px; }
`;

const Totals = styled.dl`
  display: flex;
  gap: 5px;
  margin: 0;
  padding: 0 5px;
`;

const Total = styled.div`
  flex: 1 1 20px;
  height: 46px;
  padding: 0 10px;
  border-radius: 3px;
  background: #3a3a3a;
  text-align: center;

  &:first-child { flex-basis: 24px; }
  dt { height: 22px; line-height: 22px; font-size: 12px; color: #969696; border-bottom: 1px solid #6a6a6a; box-shadow: inset 0 -1px #1c1c1c; }
  dd { margin: 0; padding-right: 10px; line-height: 26px; }
`;

/* ---------- footer ---------- */

const Status = styled.footer`
  height: 23px;
  flex: none;
  display: flex;
  align-items: center;
  justify-content: space-between;
  padding: 0 5px;
  color: #858585;
`;

const BarInfo = styled.div`
  position: relative;
  padding-left: 4px;
`;

const Watermark = styled.strong`
  position: absolute;
  left: 5px;
  top: -3px;
  display: flex;
  align-items: baseline;
  gap: 4px;
  white-space: nowrap;
  color: #222;
  font-size: 14px;
  line-height: 20px;
  text-shadow: 1px 0 1px #bbb, -1px 0 1px #bbb, 0 1px 1px #bbb, 0 -1px 1px #bbb;

  span { font: bold 20px "Noto Sans CJK SC", sans-serif; line-height: 20px; }
`;

const Clock = styled.div`
  display: flex;
  align-items: center;
  gap: 4px;

  time { color: #f04a14; }
`;

const Taskbar = styled.div`
  height: 8px;
  flex: none;
  display: flex;
  gap: 3px;
  border-top: 1px solid #0d1f36;
  background: linear-gradient(90deg, #2a6aa8, #2a6aa8 60%, #174579 82%, #174579);
`;

const Orb = styled.div`
  width: 139px;
  flex: none;
  padding-left: 10px;

  svg { margin-top: -4px; position: relative; }
`;

const Task = styled.div`
  flex: none;
  width: 100px;
  border: 1px solid #a9cbe6;
  border-bottom: 0;
  border-radius: 2px 2px 0 0;
  background: linear-gradient(90deg, ${p => (p.$lit ? "#dfe9f2, #a8c3d8" : "#8fb5d6, #3f7db5")});
`;

const Watch = ({ rows }) => (
  <Quotes>
    <tbody>
      {rows.map(([name, change, bid, bidUp, ask, askUp, open]) => (
        <React.Fragment key={name}>
          <QuoteRow $open={open}>
            <th scope="row">{name}</th>
            <Num $left $up={change[0] === "+"}>{change}</Num>
            <Num $up={bidUp}>{bid}</Num>
            <Num $up={askUp}>{ask}</Num>
          </QuoteRow>
          {open && <DetailRow><td><Details /></td></DetailRow>}
        </React.Fragment>
      ))}
    </tbody>
  </Quotes>
);

const Side = ({ rows, buy }) => (
  <DepthSide $buy={buy}>
    <ScrollTrack $inset><Thumb $size={102} /></ScrollTrack>
    <DepthTable $buy={buy}>
      <tbody>
        {rows.map(([price, volume, size]) => (
          <tr key={price}>
            <th scope="row">{price}</th>
            <td>{volume}</td>
            <td aria-hidden="true" style={{ width: size }} />
          </tr>
        ))}
      </tbody>
    </DepthTable>
  </DepthSide>
);

const Details = () => (
  <>
    <Line>
      <IconButton aria-label="收藏"><Star /></IconButton>
      <Cell>L: 0.81598</Cell>
      <Cell $width={34}>S: 0.0</Cell>
      <Cell>H: 0.82181</Cell>
      <IconButton aria-label="图表"><MiniChart /></IconButton>
    </Line>
    <Line>
      <IconButton aria-label="信息"><Info>i</Info></IconButton>
      <LimitButton>卖出限价</LimitButton>
      <IconButton aria-label="标准深度"><Bars /></IconButton>
      <IconButton aria-label="价格深度" $bright><Bars right={[0, 1]} /></IconButton>
      <IconButton aria-label="加权深度"><Bars left={[2, 3]} right={[0, 1, 2]} /></IconButton>
      <LimitButton>买入限价</LimitButton>
      <IconButton aria-label="新订单"><Scroll /></IconButton>
    </Line>
    <Ticket>
      <Deal>
        <DealHead>Sell <Arrow /></DealHead>
        <Price>0.81<b>99</b><small>3</small></Price>
      </Deal>
      <Deal $buy>
        <DealHead $buy><Arrow /> Buy</DealHead>
        <Price $buy>0.81<b>99</b><small>3</small></Price>
      </Deal>
      <Amount><Drop label="数量" value="100k AUD" $height={20} /></Amount>
    </Ticket>
    <Depth>
      <Side rows={bids} />
      <Side rows={asks} buy />
    </Depth>
    <Closers>
      <CloseButton>取消卖出订单</CloseButton>
      <CloseButton>关闭卖出仓位</CloseButton>
      <CloseButton $tall>-</CloseButton>
      <CloseButton>取消买入订单</CloseButton>
      <CloseButton>关闭买入仓位</CloseButton>
    </Closers>
  </>
);

const Info = styled.em`
  font: italic bold 13px "Liberation Serif", serif;
`;

const TimeFrame = styled.span`
  display: flex;
  gap: 4px;
  font-size: 9px;
  line-height: 9px;

  span { margin-top: 5px; }
`;

export default () => (
  <Page>
    <GlobalStyle />
    <TitleBar>
      <AppName>
        <svg width="16" height="18" viewBox="0 0 16 18" aria-hidden="true">
          <path d="M0 6l3-1v-1l3-1v2l3-1v2l3-3h4v14H0z" fill="#2c2c2c" />
          <path d="M0 14l4-4 3 1 5-6" stroke="#9fca5a" strokeWidth="2" fill="none" />
          <circle cx="12" cy="14" r="4" fill="#e8281e" stroke="#f3d0cc" />
          <path d="M10 15q2-3 4-1" stroke="#fff" fill="none" />
        </svg>
        IC Markets cTrader
      </AppName>
      <WindowButtons>
        <WindowButton $first aria-label="最小化">
          <svg width="13" height="12"><rect x="1" y="6" width="10" height="4" fill="#fff" stroke="#445" /></svg>
        </WindowButton>
        <WindowButton aria-label="还原">
          <svg width="13" height="13"><path d="M4.500 1.500h7v7h-2v3h-7v-7h2z" fill="#fff" stroke="#445" /><path d="M5 7h2v2H5z" fill="#5c80aa" stroke="#445" /></svg>
        </WindowButton>
        <WindowButton $close aria-label="关闭">
          <svg width="13" height="12"><path d="M3 2l7 8M10 2L3 10" stroke="#445" strokeWidth="4" /><path d="M3 2l7 8M10 2L3 10" stroke="#fff" strokeWidth="2" /></svg>
        </WindowButton>
      </WindowButtons>
    </TitleBar>

    <MenuBar>
      <MenuGroup $gap={15}>
        {["cTrader", "工具", "偏好", "帮助"].map(t => <MenuButton key={t}>{t}</MenuButton>)}
      </MenuGroup>
      <MenuGroup $gap={10}>
        <MenuLink href="#links">Links</MenuLink>
        <Divider />
        <MenuLink href="#workspaces">Workspaces</MenuLink>
        <Divider />
        <MenuButton $dim><Scroll />&nbsp;新订单</MenuButton>
        <Divider />
        <IconStrip>
          {topIcons.map(([name, icon]) => <IconButton key={name} $flat aria-label={name}>{icon}</IconButton>)}
        </IconStrip>
        <Divider />
        <MenuLink href="#login">登录</MenuLink>
        <MenuLink href="#register">注册</MenuLink>
        <Divider />
        <IconButton $flat aria-label="语言">
          <svg width="17" height="13" viewBox="0 0 17 13">
            <rect x="0.500" y="0.500" width="16" height="12" rx="2" fill="#e60000" stroke="#bbb" />
            <path d="M5 4l1 2h2L6.500 7.200 7 9.500 5 8 3 9.500l.5-2.300L2 6h2z" fill="#ff0" />
            <path d="M9 3q3 3 0 7" stroke="#ff0" fill="none" />
          </svg>
        </IconButton>
      </MenuGroup>
    </MenuBar>

    <Main>
      <Sidebar>
        <AccountBar>
          <Drop label="账户" value="3115131 · Demo · USD · 1:500" pad={17} dot $grow />
          <IconButton aria-label="存款">
            <Svg fill="currentColor" stroke="none"><circle cx="9.500" cy="5.500" r="2.500" /><path d="M8 6h3l1 5-2.500 1L7 11z" /><path d="M3 9h3q.5 3 3.500 3T13 9h3q0 6.500-6.500 6.500T3 9z" /></Svg>
          </IconButton>
        </AccountBar>
        <TabRow>
          <Tab $width={50} $active>商品</Tab>
          <Tab $width={50}>收藏夹</Tab>
          <Tab $width={50}>cBots</Tab>
          <Spring />
          <IconButton aria-label="新订单"><Scroll /></IconButton>
        </TabRow>
        <Panel $grow $round>
          <ListHead>
            <SearchBox $width={223}><input aria-label="搜索商品" /><Search /></SearchBox>
            <span>Bid</span>
            <span>Ask</span>
          </ListHead>
          <ListBody>
            <List>
              <GroupName>Metals (Spot)</GroupName>
              <Watch rows={metals} />
              <GroupName>Forex (Spot)</GroupName>
              <Watch rows={forex} />
            </List>
            <ScrollTrack><Thumb $size={317} /></ScrollTrack>
          </ListBody>
        </Panel>
      </Sidebar>

      <Content>
        <ChartRow>
          <ChartColumn>
            <TabRow>
              {chartTabs.map((t, i) => (
                <Tab key={t} $width={150} $start $active={i === 4}>
                  <Grip /><Spring>{t}</Spring><Detach /><Windows /><Cross />
                </Tab>
              ))}
              <IconButton aria-label="新图表"><Svg><path d="M9.500 5v9M5 9.500h9" /></Svg></IconButton>
            </TabRow>
            <Panel $round>
              <ChartArea>
                <Chart />
                <Overlay>
                  <ChartButton aria-label="放大"><Svg><path d="M8 11l-4 5" strokeWidth="3" /><circle cx="11" cy="7.500" r="5" fill="currentColor" stroke="none" /><path d="M8.500 7.500h5M11 5v5" stroke="#222" /></Svg></ChartButton>
                  <ChartButton aria-label="指标"><Svg><path d="M8 13.500H3.500v-10h12V7M5 9l3-2 2 1 4-4" />{gear(12, 12)}</Svg></ChartButton>
                  <ChartButton aria-label="图表类型"><Svg><path d="M5.500 7v9M9.500 3v13M14.500 3v9M4.500 9.500h2v4h-2zM13.500 5.500h2v4h-2z" /><path d="M8 6h3v7H8z" fill="currentColor" stroke="none" /></Svg></ChartButton>
                  <ChartButton aria-label="周期"><TimeFrame>h<span>1</span></TimeFrame></ChartButton>
                  <QuoteButton>0.87371 <Arrow size={9} /></QuoteButton>
                  <QuoteButton $buy>0.87397 <Arrow size={9} /></QuoteButton>
                  <ChartButton aria-label="清单"><Svg><path d="M9 4.500h7M9 9.500h7M9 14.500h7M3 4l1.500 1.500L7 3M3 9l1.500 1.500L7 8M3 14l1.500 1.500L7 13" /></Svg></ChartButton>
                  <ChartButton aria-label="Facebook"><Svg><circle cx="9.500" cy="9.500" r="6.500" fill="currentColor" stroke="none" /><path d="M10 16V7q0-2 2.500-2M7.500 9.500h5" stroke="#222" strokeWidth="2" /></Svg></ChartButton>
                  <ChartButton aria-label="分享"><Svg><path d="M10 3q-7 5-6 9 1 3 4 3 6 1 8-4 0-6-6-8z" fill="currentColor" stroke="none" /><path d="M10 15V7l4 2v3" stroke="#222" /></Svg></ChartButton>
                  <ChartButton aria-label="快照"><Svg stroke="none" fill="currentColor"><path d="M5 9q-1-6 4.500-6T14 9zM4 10h5l-4 6H3z" /><path d="M12 9l4 7H8z" /></Svg></ChartButton>
                </Overlay>
              </ChartArea>
              <HScroll><i /></HScroll>
            </Panel>
          </ChartColumn>
          <Toolbar>
            {tools.map((group, g) => (
              <React.Fragment key={g}>
                {g > 0 && <hr />}
                {group.map(([name, icon, on]) => <IconButton key={name} $flat={!on} aria-label={name}>{icon}</IconButton>)}
              </React.Fragment>
            ))}
          </Toolbar>
        </ChartRow>

        <Lower>
          <TabRow>
            <Tab $width={59} $start $active><Grip /><Spring>仓位</Spring><Count>0</Count></Tab>
            <Tab $width={59} $start><Grip /><Spring>订单</Spring><Count $green>2</Count></Tab>
            {["历史", "效能", "交易", "日志"].map(t => (
              <Tab key={t} $width={50} $start><Grip /><Spring $center>{t}</Spring></Tab>
            ))}
            <Spring />
            <Tab $width={51}>
              <svg width="14" height="13" viewBox="0 0 14 13" aria-hidden="true">
                <path d="M1 1h12v7H6l-4 4V8H1z" fill="#2a2a2a" stroke="#fff" /><path d="M3 2h6v4H3z" fill="#080" /><path d="M9 2h3v4H9z" fill="#e00" />
              </svg>
              反馈
            </Tab>
          </TabRow>
          <Panel $grow>
            <Filters>
              <SearchBox $width={180}><input aria-label="搜索仓位" /><Search /></SearchBox>
              <Drop label="方向" value="所有方向 (默认)" $width={115} pad={4} />
              <Spring />
              <Action $primary>新订单</Action>
              <Action disabled>全部关闭</Action>
            </Filters>
            <Grid>
              <Orders>
                <colgroup>
                  {columns.map(([name, w]) => <col key={name} width={w} />)}
                  <col width="122" />
                </colgroup>
                <thead>
                  <tr>
                    {columns.map(([name], i) => (
                      <th key={name} scope="col">
                        <span>{name}{i === 14 && <><sup>1</sup><small>▲</small></>}</span>
                      </th>
                    ))}
                    <th scope="col"><span>关闭</span></th>
                  </tr>
                </thead>
              </Orders>
              <Totals>
                {totals.map(([name, value]) => <Total key={name}><dt>{name}</dt><dd>{value}</dd></Total>)}
              </Totals>
            </Grid>
          </Panel>
        </Lower>
      </Content>
    </Main>

    <Status>
      <BarInfo>
        09/01/2015 22:00 | O: 1.01415 | H: 1.01479 | L: 1.01398 | C: 1.01407 | V: 1287
        <Watermark><span>韬客外汇</span>talkforex.com</Watermark>
      </BarInfo>
      <Clock>
        <span>Current Time:</span>
        <time>20/01/2015 14:41:57</time>
        <Drop label="时区" value="UTC+2" $width={56} pad={4} color="#f04a14" />
        <span>| 14 ms / 120 ms</span>
      </Clock>
    </Status>
    <Taskbar>
      <Orb>
        <svg width="34" height="12" viewBox="0 0 34 12" aria-hidden="true">
          <circle cx="17" cy="17" r="16" fill="#5c86ae" stroke="#c5d8ea" />
          <path d="M10 8q4-4 7-2v6H9z" fill="#f0552a" /><path d="M18 6q4 2 7 0v6h-7z" fill="#8cc63f" />
        </svg>
      </Orb>
      {Array.from({ length: 14 }, (_, i) => <Task key={i} $lit={i === 0 || i === 13} />)}
    </Taskbar>
  </Page>
);
